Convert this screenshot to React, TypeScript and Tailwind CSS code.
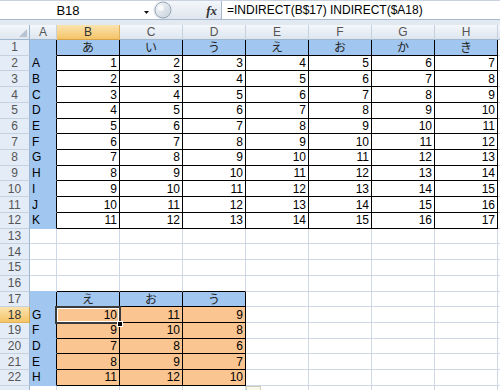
import React from 'react';

const BLUE = '#a1c6ef';
const ORANGE = '#fac590';
const GRID = '#d0d7e5';
const BLACK = '#000000';

const kana = ['あ', 'い', 'う', 'え', 'お', 'か', 'き'];
const letters = 'ABCDEFGHIJK';
const bottomRows: [string, number, number, number][] = [
  ['G', 10, 11, 9],
  ['F', 9, 10, 8],
  ['D', 7, 8, 6],
  ['E', 8, 9, 7],
  ['H', 11, 12, 10],
];

type Cell = { v?: string | number; fill?: string; align?: 'left' | 'right' | 'center'; jp?: boolean };

function getCell(r: number, c: number): Cell {
  if (r === 1) {
    if (c === 0) return { fill: BLUE };
    if (c >= 1 && c <= 7) return { fill: BLUE, v: kana[c - 1], align: 'center', jp: true };
  }
  if (r >= 2 && r <= 12) {
    const n = r - 1;
    if (c === 0) return { fill: BLUE, v: letters[n - 1], align: 'left' };
    if (c >= 1 && c <= 7) return { v: n + c - 1, align: 'right' };
  }
  if (r === 17) {
    if (c === 0) return { fill: BLUE };
    if (c >= 1 && c <= 3) return { fill: BLUE, v: ['え', 'お', 'う'][c - 1], align: 'center', jp: true };
  }
  if (r >= 18 && r <= 22) {
    const row = bottomRows[r - 18];
    if (c === 0) return { fill: BLUE, v: row[0], align: 'left' };
    if (c >= 1 && c <= 3) return { fill: ORANGE, v: row[c], align: 'right' };
  }
  return {};
}

function bordered(r: number, c: number) {
  return (r >= 1 && r <= 12 && c >= 1 && c <= 7) || (r >= 17 && r <= 22 && c >= 1 && c <= 3);
}

function edgeColor(r: number, c: number, r2: number, c2: number) {
  if (bordered(r, c) || bordered(r2, c2)) return BLACK;
  const a = getCell(r, c).fill;
  if (a) return a;
  const b = getCell(r2, c2).fill;
  if (b) return b;
  return GRID;
}

const colLetters = ['A', 'B', 'C', 'D', 'E', 'F', 'G', 'H', ''];

export default function App() {
  const rows = Array.from({ length: 23 }, (_, i) => i + 1);
  return (
    <div
      className="w-[500px] h-[390px] overflow-hidden bg-white relative"
      style={{ fontFamily: '"Liberation Sans", "Noto Sans CJK JP", sans-serif' }}
    >
      {/* Formula bar */}
      <div className="flex h-[20px] border-t border-b border-t-[#c9d2de] border-b-[#a9b9cd] bg-white">
        <div className="w-[153px] flex items-center bg-white">
          <div className="w-[136px] text-center text-[13px] leading-none text-black">B18</div>
          <svg width="17" height="18" viewBox="0 0 17 18">
            <path d="M8 10 L13 10 L10.5 13 Z" fill="#111" />
          </svg>
        </div>
        <div className="w-[69px] flex items-center relative bg-linear-to-b from-[#f3f6fa] to-[#dfe6ef] border-r border-[#a9b9cd] rounded-l-full">
          <svg width="18" height="18" viewBox="0 0 18 18" className="ml-[1px]">
            <defs>
              <linearGradient id="g1" x1="0" y1="0" x2="1" y2="1">
                <stop offset="0" stopColor="#f7f9fb" />
                <stop offset="1" stopColor="#c6cfda" />
              </linearGradient>
            </defs>
            <circle cx="9" cy="9" r="8" fill="url(#g1)" stroke="#9aa6b4" strokeWidth="1" />
            <circle cx="7" cy="7" r="3" fill="#ffffff" opacity="0.7" />
          </svg>
          <div className="flex-1" />
          <span
            className="mr-[4px] text-[13px] italic font-bold leading-none text-[#333]"
            style={{ fontFamily: '"Liberation Serif", serif' }}
          >
            fx
          </span>
        </div>
        <div className="flex-1 flex items-center pl-[5px] text-[12px] leading-none text-black whitespace-nowrap">
          =INDIRECT(B$17) INDIRECT($A18)
        </div>
      </div>
      <div className="h-[5px] bg-[#e3e9f1]" />

      {/* Sheet grid */}
      <div className="relative h-[365px] overflow-hidden">
        <div className="grid grid-cols-[30px_27px_repeat(8,63px)] grid-rows-[15px_repeat(23,15.72px)]">
          {/* Header row */}
          <div className="relative bg-linear-to-b from-[#f4f7fb] to-[#dfe6ef] border-r border-b border-[#9eb6ce]">
            <svg width="8" height="8" viewBox="0 0 8 8" className="absolute right-[2px] bottom-[2px]">
              <path d="M8 0 L8 8 L0 8 Z" fill="#b7c3d1" />
            </svg>
          </div>
          {colLetters.map((L, i) => {
            const sel = L === 'B';
            return (
              <div
                key={i}
                className={
                  'flex items-center justify-center text-[12px] leading-none border-r border-b ' +
                  (sel
                    ? 'bg-linear-to-b from-[#fbe3ae] to-[#f4c466] border-r-[#e0b25c] border-b-[#d6a24a] text-[#333]'
                    : 'bg-linear-to-b from-[#f4f7fb] to-[#dde5ef] border-r-[#c5d1df] border-b-[#9eb6ce] text-[#555]')
                }
              >
                {L}
              </div>
            );
          })}
          {rows.map((r) => (
            <React.Fragment key={r}>
              <div
                className={
                  'flex items-center justify-center text-[12px] leading-none border-r border-b ' +
                  (r === 18
                    ? 'bg-linear-to-b from-[#fbe3ae] to-[#f4c466] border-r-[#d6a24a] border-b-[#e0b25c] text-[#333]'
                    : 'bg-[#e4ecf7] border-r-[#9eb6ce] border-b-[#c5d1df] text-[#555]')
                }
              >
                {r <= 22 ? r : ''}
              </div>
              {colLetters.map((_, c) => {
                const cell = getCell(r, c);
                const just =
                  cell.align === 'left' ? 'justify-start pl-[2px]' : cell.align === 'right' ? 'justify-end pr-[2px]' : 'justify-center';
                return (
                  <div
                    key={c}
                    className={'flex items-center border-r border-b text-[12px] leading-none text-black ' + just}
                    style={{
                      backgroundColor: cell.fill ?? '#ffffff',
                      borderRightColor: edgeColor(r, c, r, c + 1),
                      borderBottomColor: edgeColor(r, c, r + 1, c),
                    }}
                  >
                    {cell.v !== undefined && (
                      <span
                        style={
                          cell.jp
                            ? { fontFamily: '"Noto Sans CJK JP", sans-serif', fontSize: '12px', lineHeight: '12px', color: '#222' }
                            : undefined
                        }
                      >
                        {cell.v}
                      </span>
                    )}
                  </div>
                );
              })}
            </React.Fragment>
          ))}
        </div>

        {/* Selection on B18 */}
        <div className="absolute left-[55px] top-[281px] w-[66px] h-[18px] border-2 border-[#3a3a3a] shadow-[inset_0_0_0_1px_#ffffff] pointer-events-none" />
        <div className="absolute left-[117px] top-[296px] w-[6px] h-[6px] bg-black border border-white" />
        {/* paste options hint */}
        <div className="absolute left-[246px] top-[361px] w-[15px] h-[8px] border border-[#cfcfb8] bg-[#f8f8ef]" />
      </div>
    </div>
  );
}
